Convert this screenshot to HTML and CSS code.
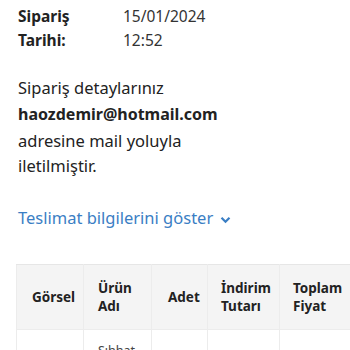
FILE: index.html
```html
<!DOCTYPE html>
<html lang="tr">
<head>
<meta charset="utf-8">
<link rel="stylesheet" href="styles.css">
</head>
<body>
<div class="page">
  <div class="meta">
    <div class="meta-label">Sipariş<br>Tarihi:</div>
    <div class="meta-value">15/01/2024<br>12:52</div>
  </div>
  <p class="info">Sipariş detaylarınız <b>haozdemir@hotmail.com</b> adresine mail yoluyla iletilmiştir.</p>
  <a class="toggle" href="#">Teslimat bilgilerini göster <svg class="chev" width="11" height="8" viewBox="0 0 11 8"><path d="M1.5 1.8 L5.5 5.8 L9.5 1.8" fill="none" stroke="currentColor" stroke-width="2.2"/></svg></a>
  <table class="items">
    <thead>
      <tr>
        <th class="c1">Görsel</th>
        <th class="c2">Ürün Adı</th>
        <th class="c3">Adet</th>
        <th class="c4">İndirim Tutarı</th>
        <th class="c5">Toplam Fiyat</th>
      </tr>
    </thead>
    <tbody>
      <tr>
        <td></td>
        <td>Sıhhat Tesisat</td>
        <td></td>
        <td></td>
        <td></td>
      </tr>
    </tbody>
  </table>
</div>
</body>
</html>
```
FILE: styles.css
```css
html, body {
  margin: 0;
  padding: 0;
  background: #fff;
  overflow: hidden;
}
body {
  font-family: "Noto Sans", "Open Sans", sans-serif;
  color: #222;
}
.page {
  padding: 4px 0 0 18px;
}
.meta {
  display: flex;
  font-size: 15.5px;
  line-height: 24px;
}
.meta-label {
  width: 105px;
  font-weight: 700;
}
.meta-value {
  color: #333;
}
.info {
  margin: 23px 0 0 0;
  width: 240px;
  font-size: 16.5px;
  line-height: 25.8px;
}
.info b {
  font-weight: 700;
  font-size: 16px;
}
.toggle {
  display: inline-flex;
  align-items: center;
  gap: 7px;
  margin-top: 26px;
  font-size: 16.5px;
  line-height: 26px;
  color: #3a7ec4;
  text-decoration: none;
}
.chev {
  margin-top: 3px;
}
.items {
  margin: 33px 0 0 -2px;
  border-collapse: collapse;
  font-size: 13.5px;
  line-height: 18px;
  width: 363px;
  table-layout: fixed;
}
.items th,
.items td {
  box-sizing: border-box;
}
.items th {
  background: #f4f4f4;
  font-weight: 700;
  text-align: left;
  height: 65px;
  padding: 0 10px 0 14px;
  border: 1px solid #ececec;
  border-top-color: #e6e6e6;
  vertical-align: middle;
}
.items td {
  border: 1px solid #ececec;
  height: 60px;
  padding: 12px 12px 12px 14px;
  vertical-align: top;
  font-size: 12.5px;
  color: #444;
}
.items th.c1 { padding-left: 15px; }
.items th.c3 { padding-left: 16px; }
.items th.c4,
.items th.c5 { padding-left: 13px; }
.c1 { width: 67px; }
.c2 { width: 68px; }
.c3 { width: 56px; }
.c4 { width: 72px; }
.c5 { width: 100px; }
```
